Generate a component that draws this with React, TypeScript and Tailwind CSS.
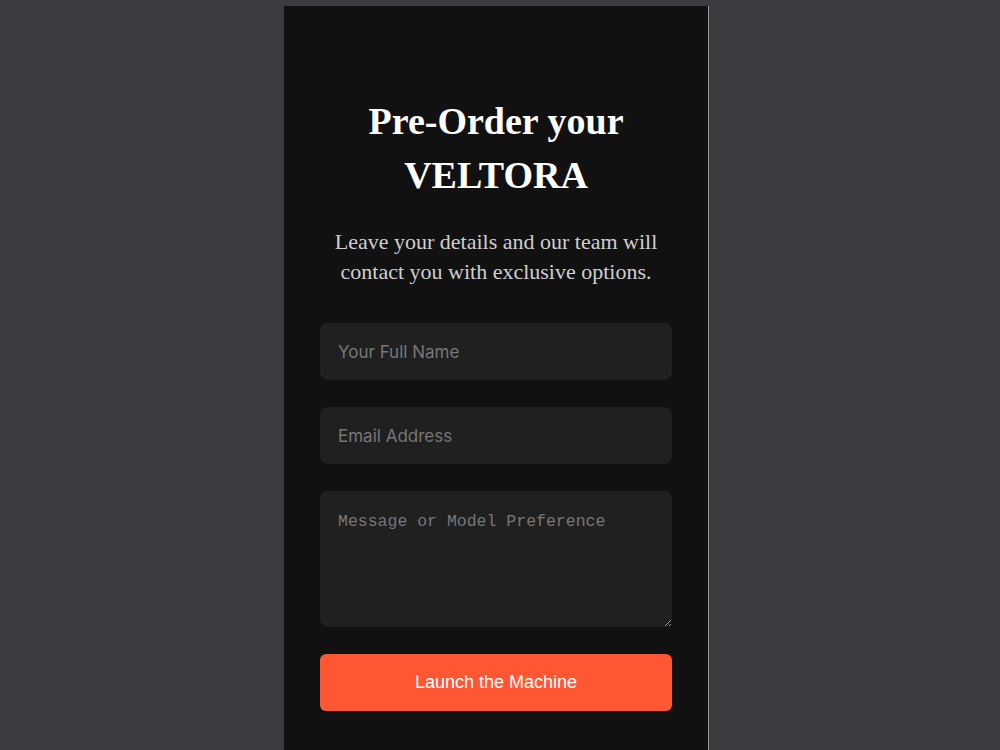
import { useState } from 'react';

function Field({ placeholder }: { placeholder: string }) {

    const [Value, SetValue] = useState('');

    return (

        <input
            type="text"
            value={Value}
            onChange={(e) => SetValue(e.target.value)}
            placeholder={placeholder}
            className="w-full h-[57px] rounded-lg bg-[#202020] px-[18px] text-[17px] text-white placeholder:text-[#777777] outline-none font-['Inter','Liberation_Sans',sans-serif]"
        />

    );

}

export default function App() {

    return (

        <div className="min-h-screen bg-[#3b3b40] pt-[6px] pl-[284px]">

            <div className="w-[425px] min-h-[744px] bg-[#111111] border-r border-[#9a9a9a] px-[36px] pt-[88px] pb-[40px]">

                <h1 className="text-center text-white font-bold text-[38px] leading-[54px] font-['Liberation_Serif',serif]">

                    Pre-Order your<br />VELTORA

                </h1>

                <p className="mt-[25px] text-center text-[#cfcfcf] text-[22px] leading-[30px] font-['Liberation_Serif',serif]">

                    Leave your details and our team will<br />contact you with exclusive options.

                </p>

                <form className="mt-[36px] flex flex-col gap-[27px]" onSubmit={(e) => e.preventDefault()}>

                    <Field placeholder="Your Full Name" />

                    <Field placeholder="Email Address" />

                    <textarea
                        placeholder="Message or Model Preference"
                        className="w-full h-[136px] rounded-lg bg-[#202020] px-[18px] pt-[19px] pb-[16px] text-[16.5px] leading-[24px] text-white placeholder:text-[#777777] outline-none font-['Liberation_Mono',monospace]"
                    />

                    <button type="submit" className="w-full h-[57px] rounded-md bg-[#ff5733] text-white text-[18px] font-['Liberation_Sans',sans-serif]">

                        Launch the Machine

                    </button>

                </form>

            </div>

        </div>

    );

}
